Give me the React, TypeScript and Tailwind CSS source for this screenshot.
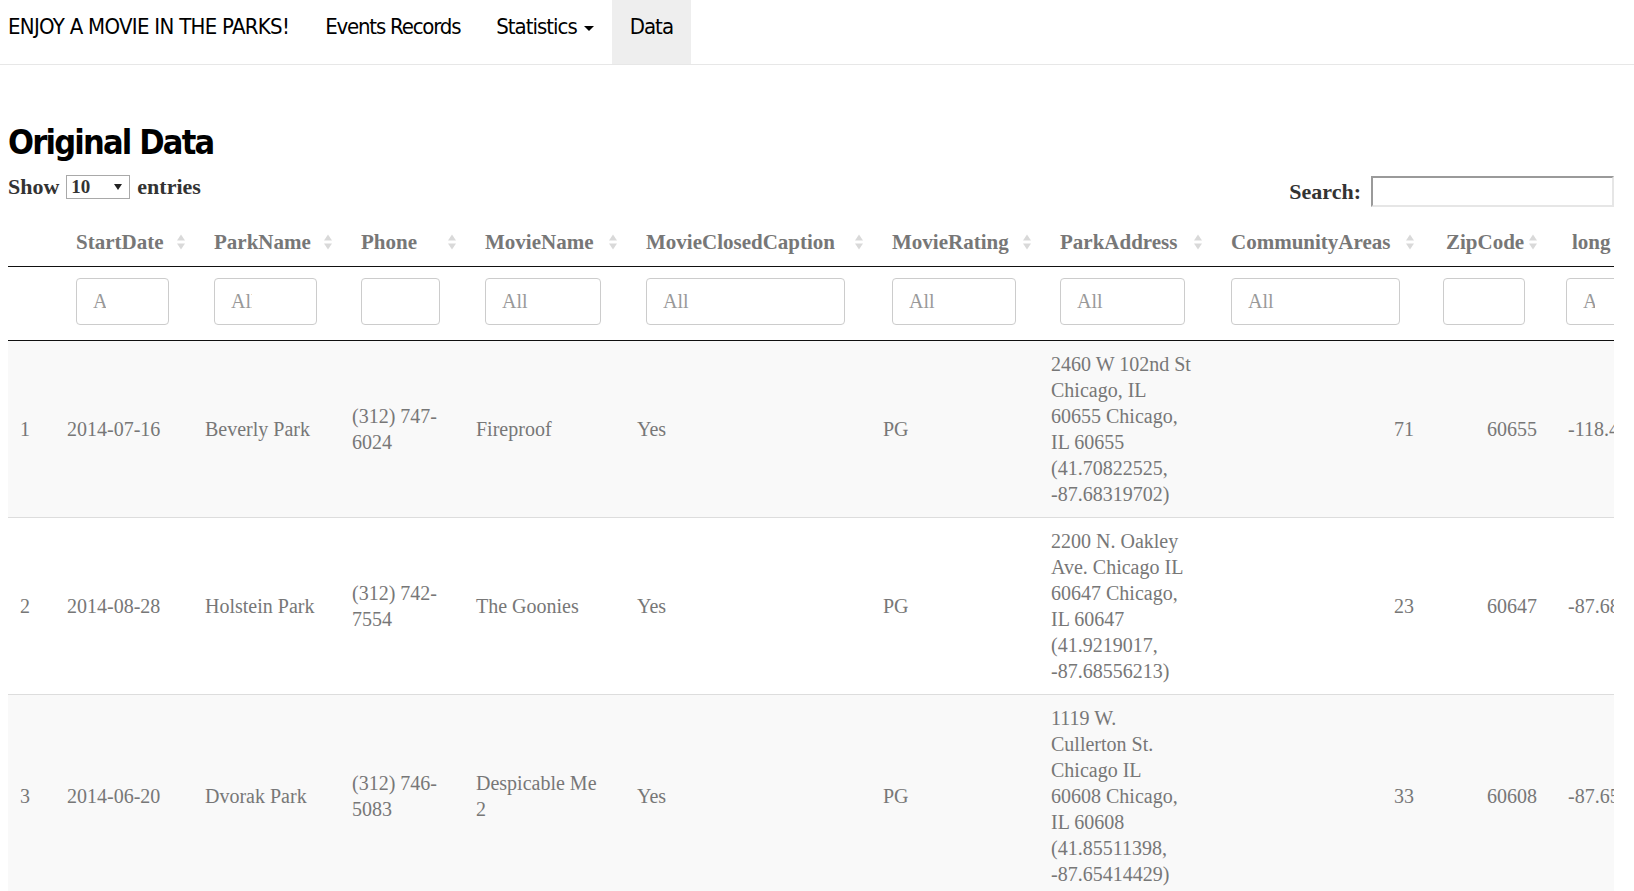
import React from "react";

type Row = {
  n: number;
  date: string;
  park: string;
  phone: string[];
  movie: string[];
  cc: string;
  rating: string;
  addr: string[];
  area: string;
  zip: string;
  long: string;
};

const rows: Row[] = [
  {
    n: 1,
    date: "2014-07-16",
    park: "Beverly Park",
    phone: ["(312) 747-", "6024"],
    movie: ["Fireproof"],
    cc: "Yes",
    rating: "PG",
    addr: ["2460 W 102nd St", "Chicago, IL", "60655 Chicago,", "IL 60655", "(41.70822525,", "-87.68319702)"],
    area: "71",
    zip: "60655",
    long: "-118.43671",
  },
  {
    n: 2,
    date: "2014-08-28",
    park: "Holstein Park",
    phone: ["(312) 742-", "7554"],
    movie: ["The Goonies"],
    cc: "Yes",
    rating: "PG",
    addr: ["2200 N. Oakley", "Ave. Chicago IL", "60647 Chicago,", "IL 60647", "(41.9219017,", "-87.68556213)"],
    area: "23",
    zip: "60647",
    long: "-87.685562",
  },
  {
    n: 3,
    date: "2014-06-20",
    park: "Dvorak Park",
    phone: ["(312) 746-", "5083"],
    movie: ["Despicable Me", "2"],
    cc: "Yes",
    rating: "PG",
    addr: ["1119 W.", "Cullerton St.", "Chicago IL", "60608 Chicago,", "IL 60608", "(41.85511398,", "-87.65414429)"],
    area: "33",
    zip: "60608",
    long: "-87.654144",
  },
];

// header label, col width, header padding, filter input classes
const columns = [
  { label: "StartDate", col: "w-[138px]", pad: "pl-[19px]", input: "w-[93px] pr-[62px]" },
  { label: "ParkName", col: "w-[147px]", pad: "pl-[19px]", input: "w-[103px] pr-[64px]" },
  { label: "Phone", col: "w-[124px]", pad: "pl-[19px]", input: "w-[79px] pr-[61px]" },
  { label: "MovieName", col: "w-[161px]", pad: "pl-[19px]", input: "w-[116px] pr-[10px]" },
  { label: "MovieClosedCaption", col: "w-[246px]", pad: "pl-[19px]", input: "w-[199px] pr-[10px]" },
  { label: "MovieRating", col: "w-[168px]", pad: "pl-[19px]", input: "w-[124px] pr-[10px]" },
  { label: "ParkAddress", col: "w-[171px]", pad: "pl-[19px]", input: "w-[125px] pr-[10px]" },
  { label: "CommunityAreas", col: "w-[212px]", pad: "pl-[19px]", input: "w-[169px] pr-[10px]" },
  { label: "ZipCode", col: "w-[123px]", pad: "pl-[22px]", input: "w-[82px] pr-[64px]" },
  { label: "long", col: "w-[160px]", pad: "pl-[25px]", input: "w-[80px] pr-[50px]" },
];

function SortIcon() {
  return (
    <svg width="8" height="18" viewBox="0 0 8 18" className="shrink-0">
      <polygon points="0,7.5 4,1.5 8,7.5" fill="#d9d9d9" />
      <polygon points="0,10.5 4,16.5 8,10.5" fill="#d9d9d9" />
    </svg>
  );
}

function Lines({ lines }: { lines: string[] }) {
  return (
    <>
      {lines.map((l, i) => (
        <span key={i} className="block whitespace-nowrap">
          {l}
        </span>
      ))}
    </>
  );
}

export default function App() {
  const nav = "font-['Liberation_Sans_Narrow','DejaVu_Sans_Condensed','Liberation_Sans',sans-serif]";
  return (
    <div className="min-h-screen bg-white font-['Liberation_Serif',serif] text-[#777]">
      {/* Navbar */}
      <nav className={`${nav} flex h-[65px] items-start border-b border-[#e7e7e7] pl-[8px] text-black`}>
        <span className="pr-[18px] pt-[13px] text-[22px] leading-[28px] tracking-[-0.7px]">ENJOY A MOVIE IN THE PARKS!</span>
        <span className="px-[18px] pt-[13px] text-[22px] leading-[28px] tracking-[-1.2px]">Events Records</span>
        <span className="flex items-center gap-[7px] px-[18px] pt-[13px] text-[22px] leading-[28px] tracking-[-1px]">
          Statistics
          <span className="mt-[2px] h-0 w-0 border-x-[5px] border-t-[5px] border-x-transparent border-t-black" />
        </span>
        <span className="h-[64px] bg-[#eeeeee] px-[18px] pt-[13px] text-[22px] leading-[28px] tracking-[-1px]">Data</span>
      </nav>

      <div className="pl-[8px] pr-[20px]">
        <h2 className={`${nav} mt-[55px] text-[34px] font-bold leading-[44px] tracking-[-1.8px] text-black`}>Original Data</h2>

        {/* Controls */}
        <div className="mt-[11px] flex items-start justify-between">
          <div className="flex items-center gap-[7px] text-[22px] font-bold leading-[24px] text-[#333]">
            <span>Show</span>
            <div className="relative flex h-[24px] w-[64px] items-center border border-[#a9a9a9] bg-white pl-[4px] text-[19px]">
              10
              <svg width="8" height="6" viewBox="0 0 8 6" className="absolute right-[7px] top-[8px]">
                <polygon points="0,0 8,0 4,6" fill="#222" />
              </svg>
            </div>
            <span>entries</span>
          </div>
          <div className="flex items-center">
            <span className="text-[22px] font-bold text-[#333]">Search:</span>
            <input
              className="ml-[10px] h-[31px] w-[243px] border-2 border-b-[#e6e6e6] border-l-[#9a9a9a] border-r-[#e6e6e6] border-t-[#9a9a9a] bg-white outline-none"
              type="text"
            />
          </div>
        </div>

        {/* Table */}
        <div className="mt-[11px] overflow-hidden">
          <table className="w-[1699px] table-fixed border-collapse text-[20px] leading-[26px]">
            <colgroup>
              <col className="w-[49px]" />
              {columns.map((c) => (
                <col key={c.label} className={c.col} />
              ))}
            </colgroup>
            <thead>
              <tr className="border-b border-[#111]">
                <th className="pb-[11px] pt-[10px]" />
                {columns.map((c) => (
                  <th key={c.label} className={`${c.pad} pb-[11px] pr-[10px] pt-[10px] text-left text-[21px] font-bold text-[#777]`}>
                    <div className="flex items-center justify-between gap-[4px]">
                      <span className="whitespace-nowrap">{c.label}</span>
                      <SortIcon />
                    </div>
                  </th>
                ))}
              </tr>
              <tr className="border-b border-[#111]">
                <td className="pb-[15px] pt-[11px]" />
                {columns.map((c) => (
                  <td key={c.label} className="pb-[15px] pl-[19px] pt-[11px]">
                    <input
                      placeholder="All"
                      className={`${c.input} block h-[47px] rounded-[4px] border border-[#cccccc] bg-white pl-[16px] text-[20px] text-[#555] outline-none placeholder:text-[#999]`}
                    />
                  </td>
                ))}
              </tr>
            </thead>
            <tbody>
              {rows.map((r, i) => (
                <tr key={r.n} className={`${i > 0 ? "border-t border-[#dddddd]" : ""} ${i % 2 === 0 ? "bg-[#f9f9f9]" : "bg-white"}`}>
                  <td className="py-[10px] pl-[12px] pr-[10px] align-middle">{r.n}</td>
                  <td className="px-[10px] py-[10px] align-middle">{r.date}</td>
                  <td className="px-[10px] py-[10px] align-middle whitespace-nowrap">{r.park}</td>
                  <td className="px-[10px] py-[10px] align-middle">
                    <Lines lines={r.phone} />
                  </td>
                  <td className="px-[10px] py-[10px] align-middle">
                    <Lines lines={r.movie} />
                  </td>
                  <td className="px-[10px] py-[10px] align-middle">{r.cc}</td>
                  <td className="px-[10px] py-[10px] align-middle">{r.rating}</td>
                  <td className="px-[10px] py-[10px] align-middle">
                    <Lines lines={r.addr} />
                  </td>
                  <td className="px-[10px] py-[10px] text-right align-middle">{r.area}</td>
                  <td className="px-[10px] py-[10px] text-right align-middle">{r.zip}</td>
                  <td className="py-[10px] pl-[21px] pr-[10px] align-middle whitespace-nowrap">{r.long}</td>
                </tr>
              ))}
            </tbody>
          </table>
        </div>
      </div>
    </div>
  );
}
